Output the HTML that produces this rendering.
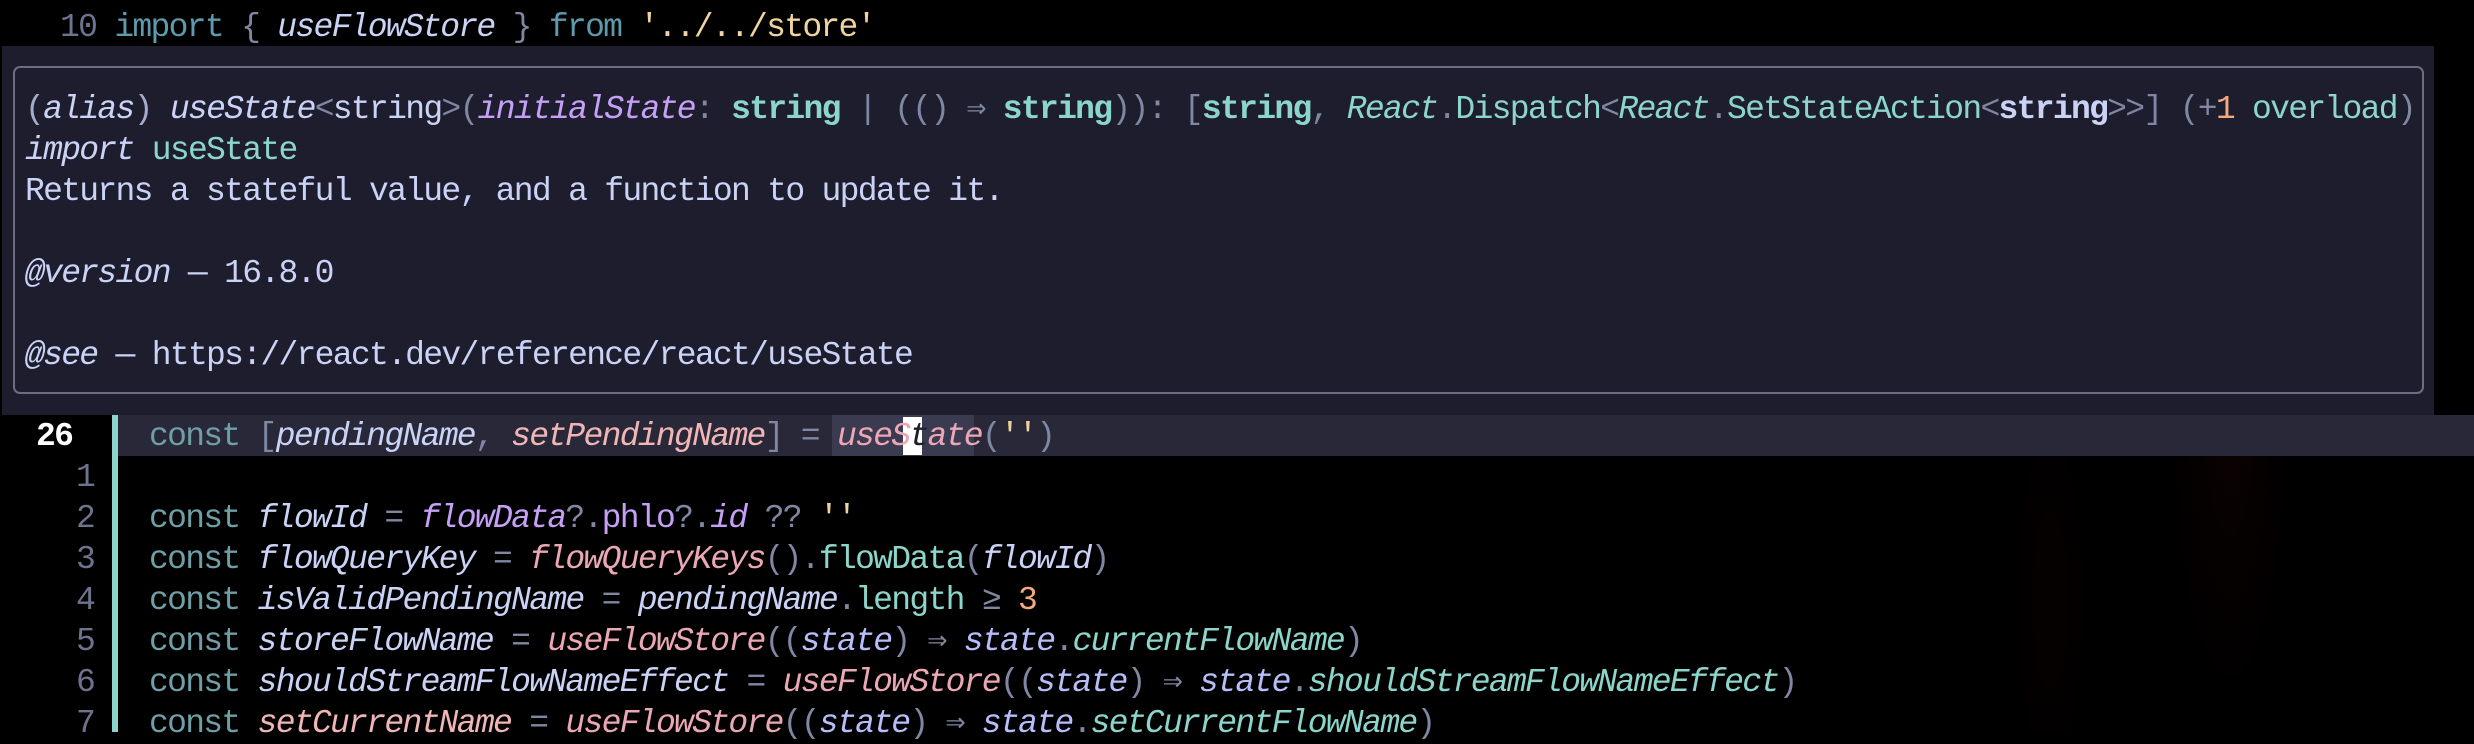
<!DOCTYPE html>
<html><head><meta charset="utf-8"><style>
html,body{margin:0;padding:0;}
body{width:2474px;height:732px;position:relative;overflow:hidden;background:#000;
font-family:"Liberation Mono","DejaVu Sans Mono",monospace;font-size:33px;letter-spacing:-1.7px;}
.bg{position:absolute;left:1850px;top:0;width:624px;height:732px;
background:radial-gradient(ellipse 90px 420px at 380px 420px,rgba(50,8,6,.22),transparent 70%),radial-gradient(ellipse 60px 300px at 200px 600px,rgba(40,8,5,.15),transparent 70%);}
.l{position:absolute;white-space:pre;line-height:41px;height:41px;color:#cad3f5;}
.i{font-style:italic}.b{font-weight:bold}
.kw{color:#5d9aab}.kc{color:#6f9ea6}.p{color:#8087a2}.w{color:#cad3f5}
.pk{color:#f0b6b6}.fn{color:#eba8b4}.mv{color:#c6a0f6}.tl{color:#8bd5ca}.ye{color:#eed49f}
.pe{color:#f5a97f}.lv{color:#b7bdf8}.gr{color:#6e738d}.al{color:#a5adcb}
</style></head><body>
<div class="bg"></div>
<div class="l" style="left:60px;top:7px"><span class="gr">10</span> <span class="kw">import</span> <span class="p">{</span> <span class="i w">useFlowStore</span> <span class="p">}</span> <span class="kw">from</span> <span class="ye">'../../store'</span></div>

<div style="position:absolute;left:2px;top:46px;width:2432px;height:369px;background:#1e1d2e;"></div>
<div style="position:absolute;left:13px;top:66px;width:2407px;height:324px;border:2px solid #6e6c82;border-radius:7px;"></div>

<div class="l" style="left:25px;top:89px"><span class="al">(</span><span class="i w">alias</span><span class="al">)</span> <span class="i w">useState</span><span class="p">&lt;</span><span class="w">string</span><span class="p">&gt;(</span><span class="i mv">initialState</span><span class="p">:</span> <span class="b tl">string</span> <span class="p">|</span> <span class="p">(()</span> <span class="p">⇒</span> <span class="b tl">string</span><span class="p">)):</span> <span class="p">[</span><span class="b tl">string</span><span class="p">,</span> <span class="i tl">React</span><span class="p">.</span><span class="tl">Dispatch</span><span class="p">&lt;</span><span class="i tl">React</span><span class="p">.</span><span class="tl">SetStateAction</span><span class="p">&lt;</span><span class="b w">string</span><span class="p">&gt;&gt;]</span> <span class="p">(+</span><span class="pe">1</span> <span class="tl">overload</span><span class="p">)</span></div>
<div class="l" style="left:25px;top:130px"><span class="i w">import</span> <span class="tl">useState</span></div>
<div class="l" style="left:25px;top:171px">Returns a stateful value, and a function to update it.</div>
<div class="l" style="left:25px;top:253px"><span class="i">@version</span> — 16.8.0</div>
<div class="l" style="left:25px;top:335px"><span class="i">@see</span> — https://react.dev/reference/react/useState</div>

<div style="position:absolute;left:118px;top:415px;width:2356px;height:41px;background:#282839;"></div>
<div style="position:absolute;left:832px;top:415px;width:142px;height:41px;background:#3a3a50;"></div>
<div style="position:absolute;left:903px;top:417px;width:19px;height:38px;background:#fff;"></div>
<div style="position:absolute;left:112px;top:415px;width:6px;height:317px;background:#8bd5ca;"></div>

<div class="l b" style="left:36px;top:416px;color:#fff">26</div>
<div class="l gr" style="left:76px;top:457px">1</div>
<div class="l gr" style="left:76px;top:498px">2</div>
<div class="l gr" style="left:76px;top:539px">3</div>
<div class="l gr" style="left:76px;top:580px">4</div>
<div class="l gr" style="left:76px;top:621px">5</div>
<div class="l gr" style="left:76px;top:662px">6</div>
<div class="l gr" style="left:76px;top:703px">7</div>

<div class="l" style="left:149px;top:416px"><span class="kc">const</span> <span class="p">[</span><span class="i w">pendingName</span><span class="p">,</span> <span class="i pk">setPendingName</span><span class="p">]</span> <span class="p">=</span> <span class="i fn">useS<span style="color:#1e1e2e">t</span>ate</span><span class="p">(</span><span class="ye">''</span><span class="p">)</span></div>
<div class="l" style="left:149px;top:498px"><span class="kc">const</span> <span class="i w">flowId</span> <span class="p">=</span> <span class="i mv">flowData</span><span class="p">?.</span><span class="mv">phlo</span><span class="p">?.</span><span class="i mv">id</span> <span class="p">??</span> <span class="ye">''</span></div>
<div class="l" style="left:149px;top:539px"><span class="kc">const</span> <span class="i w">flowQueryKey</span> <span class="p">=</span> <span class="i fn">flowQueryKeys</span><span class="p">().</span><span class="tl">flowData</span><span class="p">(</span><span class="i w">flowId</span><span class="p">)</span></div>
<div class="l" style="left:149px;top:580px"><span class="kc">const</span> <span class="i w">isValidPendingName</span> <span class="p">=</span> <span class="i w">pendingName</span><span class="p">.</span><span class="tl">length</span> <span class="p">≥</span> <span class="pe">3</span></div>
<div class="l" style="left:149px;top:621px"><span class="kc">const</span> <span class="i w">storeFlowName</span> <span class="p">=</span> <span class="i fn">useFlowStore</span><span class="p">((</span><span class="i lv">state</span><span class="p">)</span> <span class="p">⇒</span> <span class="i lv">state</span><span class="p">.</span><span class="i tl">currentFlowName</span><span class="p">)</span></div>
<div class="l" style="left:149px;top:662px"><span class="kc">const</span> <span class="i w">shouldStreamFlowNameEffect</span> <span class="p">=</span> <span class="i fn">useFlowStore</span><span class="p">((</span><span class="i lv">state</span><span class="p">)</span> <span class="p">⇒</span> <span class="i lv">state</span><span class="p">.</span><span class="i tl">shouldStreamFlowNameEffect</span><span class="p">)</span></div>
<div class="l" style="left:149px;top:703px"><span class="kc">const</span> <span class="i pk">setCurrentName</span> <span class="p">=</span> <span class="i fn">useFlowStore</span><span class="p">((</span><span class="i lv">state</span><span class="p">)</span> <span class="p">⇒</span> <span class="i lv">state</span><span class="p">.</span><span class="i tl">setCurrentFlowName</span><span class="p">)</span></div>
</body></html>
